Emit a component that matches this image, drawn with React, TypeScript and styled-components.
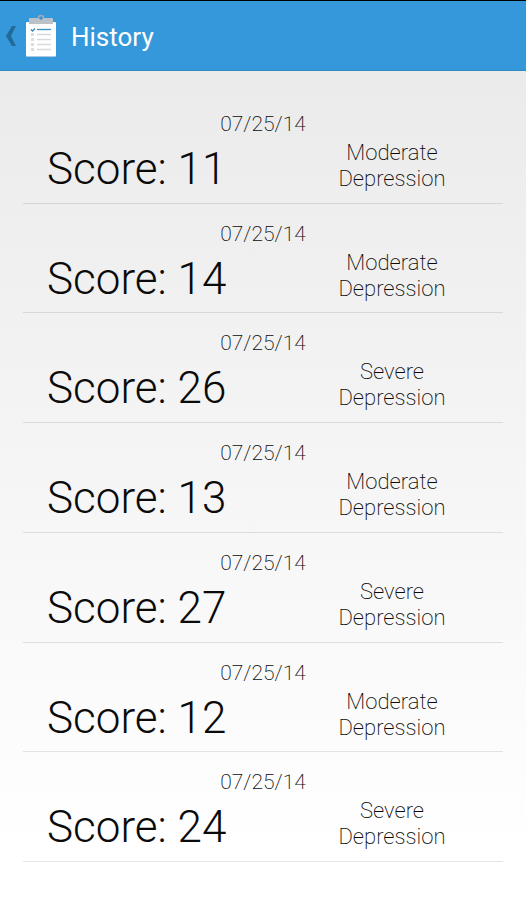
import React from "react";
import styled, { createGlobalStyle } from "styled-components";

const GlobalStyle = createGlobalStyle`
  * { box-sizing: border-box; }
  body {
    margin: 0;
    font-family: Roboto, "Open Sans", sans-serif;
    font-weight: 200;
    color: #0a0a0a;
  }
`;

const Screen = styled.div`
  min-height: 100vh;
  display: flex;
  flex-direction: column;
  background: linear-gradient(#e9e9e9, #ffffff 95%);
`;

const AppBar = styled.header`
  display: flex;
  align-items: center;
  height: 71px;
  padding-left: 5px;
  border-top: 1px solid #000;
  border-bottom: 1px solid #3187c0;
  background: #3498db;
`;

const BackButton = styled.button`
  display: flex;
  align-items: center;
  gap: 9px;
  padding: 0;
  border: 0;
  background: none;
  cursor: pointer;
`;

const Title = styled.h1`
  margin: 3px 0 0 15px;
  font-size: 26px;
  line-height: 32px;
  font-weight: 400;
  color: #fff;
`;

const List = styled.ul`
  flex: 1;
  display: flex;
  flex-direction: column;
  list-style: none;
  margin: 0;
  padding: 23px 23px 38px;
`;

const Entry = styled.li`
  flex: 1;
  padding: 17px 0 9px;
  border-bottom: 1px solid rgba(0, 0, 0, 0.1);
`;

const DateLabel = styled.time`
  display: block;
  text-align: center;
  font-size: 21px;
  line-height: 26px;
`;

const Result = styled.div`
  display: grid;
  grid-template-columns: 1fr 1fr;
  align-items: center;
  padding-top: 2px;
`;

const Score = styled.div`
  padding: 6px 0 0 24px;
  font-size: 44px;
  line-height: 48px;
  font-weight: 300;
`;

const Severity = styled.div`
  display: flex;
  flex-direction: column;
  padding-left: 18px;
  text-align: center;
  font-size: 22px;
  line-height: 26px;
`;

const entries = [
  { score: 11, severity: "Moderate" },
  { score: 14, severity: "Moderate" },
  { score: 26, severity: "Severe" },
  { score: 13, severity: "Moderate" },
  { score: 27, severity: "Severe" },
  { score: 12, severity: "Moderate" },
  { score: 24, severity: "Severe" },
];

function BackArrow() {
  return (
    <svg width="12" height="22" viewBox="0 0 12 22" aria-hidden="true">
      <path d="M7 1h4L6 11l5 10H7L1 11z" fill="#246a99" />
    </svg>
  );
}

function Clipboard() {
  return (
    <svg width="30" height="44" viewBox="0 0 30 44" aria-hidden="true">
      <rect y="9" width="30" height="34" rx="1" fill="#a9cbe4" />
      <rect y="8" width="30" height="34" rx="1" fill="#fff" />
      <circle cx="15" cy="4" r="2.5" fill="none" stroke="#a4adb5" strokeWidth="1.5" />
      <path d="M4 4h8l3 2.5L18 4h8q1 0 1 1v5H3V5q0-1 1-1z" fill="#bbc1c8" />
      <path d="M5 15.5l1.5 1.5L9 14.5" fill="none" stroke="#2d86b4" strokeWidth="1.3" />
      <path d="M11 15.5h14" stroke="#3d96c4" strokeWidth="1.4" />
      <path d="M5 20.5h3M5 25.5h3M5 30.5h3M5 35.5h3" stroke="#dadcdd" strokeWidth="3" />
      <path d="M11 20.5h14M11 25.5h14M11 30.5h14M11 35.5h14" stroke="#d8dbdd" strokeWidth="1.4" />
    </svg>
  );
}

export default function App() {
  return (
    <Screen>
      <GlobalStyle />
      <AppBar>
        <BackButton aria-label="Back">
          <BackArrow />
          <Clipboard />
        </BackButton>
        <Title>History</Title>
      </AppBar>
      <List>
        {entries.map((entry) => (
          <Entry key={entry.score}>
            <DateLabel dateTime="2014-07-25">07/25/14</DateLabel>
            <Result>
              <Score>Score: {entry.score}</Score>
              <Severity>
                <span>{entry.severity}</span>
                <span>Depression</span>
              </Severity>
            </Result>
          </Entry>
        ))}
      </List>
    </Screen>
  );
}
